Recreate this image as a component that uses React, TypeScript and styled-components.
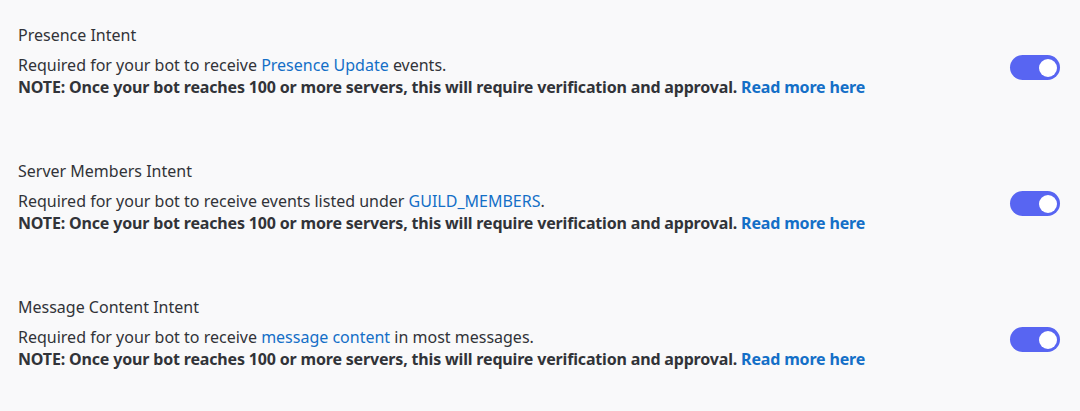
import React, { useState } from "react";
import styled, { createGlobalStyle } from "styled-components";

const GlobalStyle = createGlobalStyle`
  html, body {
    margin: 0;
    padding: 0;
    background: #f9f9fa;
  }
  body {
    font-family: "Noto Sans", "Open Sans", sans-serif;
    color: #2e3035;
  }
`;

const intents = [
  {
    id: "presence",
    title: "Presence Intent",
    before: "Required for your bot to receive ",
    link: "Presence Update",
    after: " events.",
  },
  {
    id: "members",
    title: "Server Members Intent",
    before: "Required for your bot to receive events listed under ",
    link: "GUILD_MEMBERS",
    after: ".",
  },
  {
    id: "content",
    title: "Message Content Intent",
    before: "Required for your bot to receive ",
    link: "message content",
    after: " in most messages.",
  },
];

const Toggle = ({ on, onClick }: { on: boolean; onClick: () => void }) => (
  <Switch $on={on} onClick={onClick}>
    <Knob $on={on} />
  </Switch>
);

export default function App() {
  const [enabled, setEnabled] = useState<Record<string, boolean>>({
    presence: true,
    members: true,
    content: true,
  });

  return (
    <>
      <GlobalStyle />
      <Page>
        {intents.map((intent) => (
          <Section key={intent.id}>
            <Title>{intent.title}</Title>
            <Row>
              <Description>
                <p>
                  {intent.before}
                  <Link>{intent.link}</Link>
                  {intent.after}
                </p>
                <Note>
                  NOTE: Once your bot reaches 100 or more servers, this will
                  require verification and approval. <Link>Read more here</Link>
                </Note>
              </Description>
              <Toggle
                on={enabled[intent.id]}
                onClick={() =>
                  setEnabled({ ...enabled, [intent.id]: !enabled[intent.id] })
                }
              />
            </Row>
          </Section>
        ))}
      </Page>
    </>
  );
}

const Page = styled.div`
  display: flex;
  flex-direction: column;
  gap: 63px;
  padding: 25px 18px 0 18px;
  width: 1080px;
  box-sizing: border-box;
`;

const Section = styled.div`
  display: flex;
  flex-direction: column;
  gap: 9px;
`;

const Title = styled.div`
  font-size: 16px;
  line-height: 20px;
  color: #313338;
`;

const Row = styled.div`
  display: flex;
  justify-content: space-between;
  align-items: flex-start;
`;

const Description = styled.div`
  font-size: 16px;
  line-height: 22px;
  color: #313338;

  p {
    margin: 0;
  }
`;

const Note = styled.p`
  font-weight: 700;
  letter-spacing: -0.17px;
`;

const Link = styled.span`
  color: #146fc7;
  cursor: pointer;
`;

const Switch = styled.div<{ $on: boolean }>`
  position: relative;
  width: 50px;
  height: 25px;
  margin-top: 1px;
  margin-right: 2px;
  border-radius: 13px;
  background: ${({ $on }) => ($on ? "#5865f2" : "#80848e")};
  cursor: pointer;
  flex-shrink: 0;
`;

const Knob = styled.div<{ $on: boolean }>`
  position: absolute;
  top: 3.5px;
  left: ${({ $on }) => ($on ? "29px" : "3px")};
  width: 18px;
  height: 18px;
  border-radius: 50%;
  background: #fff;
`;
